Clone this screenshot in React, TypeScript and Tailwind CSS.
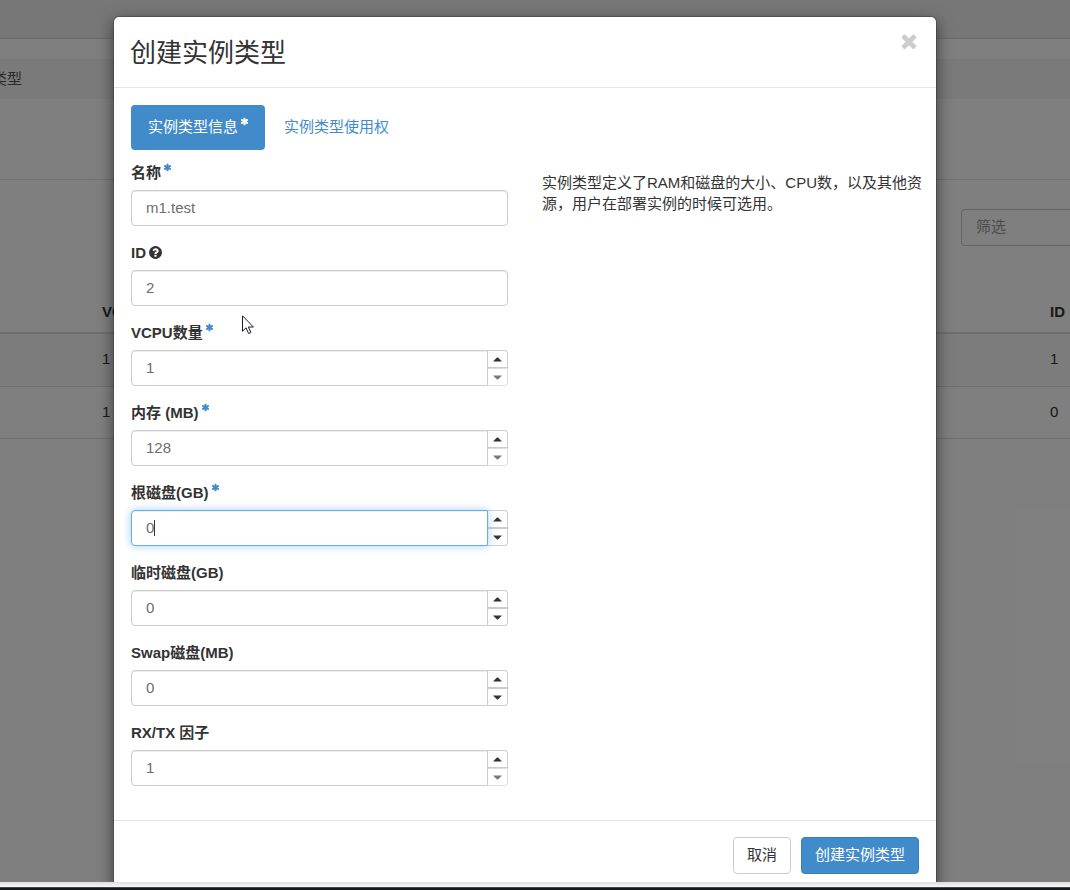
import React, { useState } from 'react';

interface IconProps {
  className?: string;
}

const AsteriskIcon: React.FC<IconProps> = ({ className }) => (
  <svg viewBox="0 0 1792 1792" fill="currentColor" className={className} aria-hidden="true">
    <path d="M1546 1050q46 26 59.5 77.5t-12.5 97.5l-64 110q-26 46-77.5 59.5t-97.5-12.5l-266-153v307q0 52-38 90t-90 38h-128q-52 0-90-38t-38-90v-307l-266 153q-46 26-97.5 12.5t-77.5-59.5l-64-110q-26-46-12.5-97.5t59.5-77.5l266-154-266-154q-46-26-59.5-77.5t12.5-97.5l64-110q26-46 77.5-59.5t97.5 12.5l266 153v-307q0-52 38-90t90-38h128q52 0 90 38t38 90v307l266-153q46-26 97.5-12.5t77.5 59.5l64 110q26 46 12.5 97.5t-59.5 77.5l-266 154z" />
  </svg>
);

const QuestionIcon: React.FC<IconProps> = ({ className }) => (
  <svg viewBox="0 0 1792 1792" fill="currentColor" className={className} aria-hidden="true">
    <path d="M1024 1376v-192q0-14-9-23t-23-9h-192q-14 0-23 9t-9 23v192q0 14 9 23t23 9h192q14 0 23-9t9-23zm256-672q0-88-55.5-163t-138.5-116-170-41q-243 0-371 213-15 24 8 42l132 100q7 6 19 6 16 0 25-12 53-68 86-92 34-24 86-24 48 0 85.5 26t37.5 59q0 38-20 61t-68 45q-63 28-115.5 86.5t-52.5 125.5v36q0 14 9 23t23 9h192q14 0 23-9t9-23q0-19 21.5-49.5t54.5-49.5q32-18 49-28.5t46-35 44.5-48 28-60.5 12.5-81zm384 192q0 209-103 385.5t-279.5 279.5-385.5 103-385.5-103-279.5-279.5-103-385.5 103-385.5 279.5-279.5 385.5-103 385.5 103 279.5 279.5 103 385.5z" />
  </svg>
);

const CloseIcon: React.FC<IconProps> = ({ className }) => (
  <svg viewBox="0 0 1792 1792" fill="currentColor" className={className} aria-hidden="true">
    <path d="M1490 1322q0 40-28 68l-136 136q-28 28-68 28t-68-28l-294-294-294 294q-28 28-68 28t-68-28l-136-136q-28-28-28-68t28-68l294-294-294-294q-28-28-28-68t28-68l136-136q28-28 68-28t68 28l294 294 294-294q28-28 68-28t68 28l136 136q28 28 28 68t-28 68l-294 294 294 294q28 28 28 68z" />
  </svg>
);

interface FlavorField {
  id: string;
  label: string;
  value: string;
  required?: boolean;
  help?: boolean;
  numeric?: boolean;
  min?: number;
  active?: boolean;
}

const FIELDS: FlavorField[] = [
  { id: 'name', label: '名称', value: 'm1.test', required: true },
  { id: 'flavor_id', label: 'ID', value: '2', help: true },
  { id: 'vcpus', label: 'VCPU数量', value: '1', required: true, numeric: true, min: 1 },
  { id: 'memory_mb', label: '内存 (MB)', value: '128', required: true, numeric: true, min: 128 },
  { id: 'disk_gb', label: '根磁盘(GB)', value: '0', required: true, numeric: true, active: true },
  { id: 'eph_gb', label: '临时磁盘(GB)', value: '0', numeric: true },
  { id: 'swap_mb', label: 'Swap磁盘(MB)', value: '0', numeric: true },
  { id: 'rxtx_factor', label: 'RX/TX 因子', value: '1', numeric: true, min: 1 },
];

const inputBase = 'block h-9 w-full min-w-0 border bg-white px-3.5 pb-0.5 text-[15px] text-[#6e6e6e] outline-none';
const inputIdle = 'border-[#ccc] shadow-[inset_0_1px_1px_rgba(0,0,0,0.075)]';
const inputActive =
  'border-[#66afe9] shadow-[inset_0_1px_1px_rgba(0,0,0,0.075),0_0_8px_rgba(102,175,233,0.6)]';

const Field: React.FC<{ field: FlavorField; onChange: (id: string, value: string) => void }> = ({ field, onChange }) => {
  const step = (by: number) => onChange(field.id, String(Number(field.value) + by));
  const atMin = field.min !== undefined && Number(field.value) <= field.min;

  return (
    <div className="mb-[17px]">
      <label htmlFor={field.id} className="mb-2 flex h-[19px] items-center font-bold">
        <span>{field.label}</span>
        {field.required && <AsteriskIcon className="mb-2.5 ml-0.5 size-[9px] text-[#428bca]" />}
        {field.help && <QuestionIcon className="ml-0.5 size-[15px]" />}
      </label>

      {field.numeric ? (
        <div className="flex">
          <div className="relative min-w-0 flex-1">
            <input
              id={field.id}
              type="text"
              inputMode="numeric"
              className={`${inputBase} rounded-l-sm ${field.active ? inputActive : inputIdle}`}
              value={field.value}
              onChange={(e) => onChange(field.id, e.target.value)}
            />
            {field.active && <span className="absolute top-2.5 left-[23px] h-4 w-px bg-[#333]" />}
          </div>
          <div className="flex w-5 flex-col">
            <button
              type="button"
              aria-label={`${field.label} +`}
              onClick={() => step(1)}
              className="flex flex-1 items-center justify-center rounded-tr-sm border border-l-0 border-[#ccc]"
            >
              <svg viewBox="0 0 9 5" className="h-[5px] w-[9px]" fill="currentColor"><path d="M0 4.6 4 .4h1l4 4.2z" /></svg>
            </button>
            <button
              type="button"
              aria-label={`${field.label} -`}
              disabled={atMin}
              onClick={() => step(-1)}
              className="flex flex-1 items-center justify-center rounded-br-sm border border-l-0 border-[#ccc] disabled:opacity-65"
            >
              <svg viewBox="0 0 9 5" className="h-[5px] w-[9px]" fill="currentColor"><path d="M0 .4h9L5 4.6H4z" /></svg>
            </button>
          </div>
        </div>
      ) : (
        <input
          id={field.id}
          type="text"
          className={`${inputBase} rounded-sm ${inputIdle}`}
          value={field.value}
          onChange={(e) => onChange(field.id, e.target.value)}
        />
      )}
    </div>
  );
};

// Flavor list behind the dialog
const FlavorPage: React.FC = () => (
  <div className="h-full bg-white">
    <div className="h-[39px] border-b border-[#d4d4d4] bg-[#eee]" />
    <div className="mt-5 flex h-10 items-center overflow-hidden bg-[#f5f5f5] pb-0.5 text-[#555]">
      <span className="-ml-2">类型</span>
    </div>
    <div className="h-[81px] border-b border-[#e7e7e7]" />
    <div className="flex justify-end pt-[29px]">
      <input
        type="text"
        aria-label="筛选"
        placeholder="筛选"
        className="h-[37px] w-[109px] rounded-l-sm border border-r-0 border-[#ccc] px-3.5 pb-0.5 placeholder:text-[#999]"
      />
    </div>
    <table className="mt-11 w-full table-fixed border-b border-[#ddd] text-left">
      <colgroup>
        <col className="w-[94px]" />
        <col />
        <col className="w-7" />
      </colgroup>
      <thead>
        <tr className="h-[43px] border-b-2 border-[#ddd]">
          <th />
          <th className="pl-2">VCPU数量</th>
          <th className="pl-2">ID</th>
        </tr>
      </thead>
      <tbody>
        <tr className="h-[53px] border-b border-[#ddd] bg-[#f9f9f9]">
          <td />
          <td className="pb-0.5 pl-2">1</td>
          <td className="pb-0.5 pl-2">1</td>
        </tr>
        <tr className="h-[52px]">
          <td />
          <td className="pb-0.5 pl-2">1</td>
          <td className="pb-0.5 pl-2">0</td>
        </tr>
      </tbody>
    </table>
  </div>
);

export default function App() {
  const [fields, setFields] = useState(FIELDS);

  const handleChange = (id: string, value: string) => {
    setFields((prev) => prev.map((f) => (f.id === id ? { ...f, value } : f)));
  };

  return (
    <div className="flex h-screen flex-col font-['Liberation_Sans','Noto_Sans_CJK_SC',sans-serif] text-[15px] leading-[21px] text-[#333]">
      <div className="relative min-h-0 flex-1 overflow-hidden">
        <FlavorPage />

        <div className="absolute inset-0 overflow-hidden bg-black/50 pt-4 pr-5">
          <div
            role="dialog"
            aria-labelledby="modal-title"
            className="mx-auto max-w-[824px] rounded-md border border-black/20 bg-white bg-clip-padding shadow-[0_5px_15px_rgba(0,0,0,0.5)]"
          >
            <div className="flex h-[71px] items-start justify-between border-b border-[#e5e5e5] px-4 pt-[13px]">
              <h3 id="modal-title" className="pt-1 text-[26px] leading-[38px]">创建实例类型</h3>
              <button type="button" aria-label="关闭" className="text-[#ccc]">
                <CloseIcon className="size-[22px]" />
              </button>
            </div>

            <div className="p-[17px] pb-0">
              <div className="mb-[13px] flex gap-0.5">
                <a href="#info" className="flex h-[45px] items-center rounded-sm bg-[#428bca] pr-4 pb-0.5 pl-[17px] text-white">
                  实例类型信息
                  <AsteriskIcon className="mb-2.5 ml-0.5 size-[9px]" />
                </a>
                <a href="#access" className="flex h-[45px] items-center px-[17px] pb-0.5 text-[#428bca]">
                  实例类型使用权
                </a>
              </div>

              <div className="grid grid-cols-2 gap-[34px] pb-[17px]">
                <div className="-mb-[17px]">
                  {fields.map((field) => (
                    <Field key={field.id} field={field} onChange={handleChange} />
                  ))}
                </div>
                <p className="-mr-3 pt-[9px]">
                  实例类型定义了RAM和磁盘的大小、CPU数，以及其他资源，用户在部署实例的时候可选用。
                </p>
              </div>
            </div>

            <div className="mt-[17px] flex justify-end gap-2.5 border-t border-[#e5e5e5] px-[17px] py-4">
              <button type="button" className="h-[37px] rounded-sm border border-[#ccc] bg-white px-[13px] pb-0.5">
                取消
              </button>
              <button type="button" className="h-[37px] rounded-sm border border-[#357ebd] bg-[#428bca] px-[13px] pb-0.5 text-white">
                创建实例类型
              </button>
            </div>
          </div>
        </div>

        {/* mouse pointer */}
        <svg viewBox="0 0 12 19" className="pointer-events-none absolute top-[315px] left-[242px] h-[19px] w-3">
          <path
            d="M.5.8v15.4l3.6-3.4 2.5 5.7 2.3-1-2.5-5.5h5z"
            fill="#fff"
            stroke="#1a1a2a"
            strokeWidth="1"
          />
        </svg>
      </div>

      <div className="flex h-2 flex-col">
        <div className="flex-1 bg-linear-to-b from-[#dedede] to-[#f7f7f7]" />
        <div className="h-[3px] border-t border-[#3c4650] bg-[#14171e]" />
      </div>
    </div>
  );
}
